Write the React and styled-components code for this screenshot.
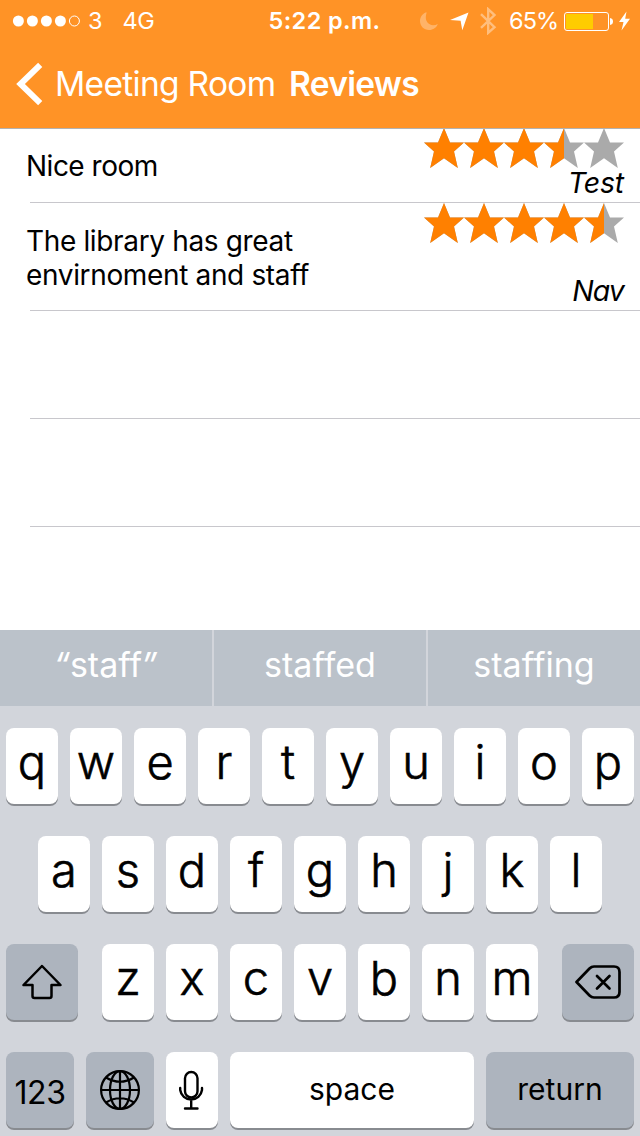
import React from "react";
import styled, { createGlobalStyle } from "styled-components";

const GlobalStyle = createGlobalStyle`
  * { box-sizing: border-box; }
  body { margin: 0; background: #fff; }
`;

const Screen = styled.div`
  width: 640px;
  height: 1136px;
  display: flex;
  flex-direction: column;
  overflow: hidden;
  background: #fff;
  color: #000;
  font-family: Inter, "Liberation Sans", sans-serif;
`;

const Header = styled.header`
  position: relative;
  z-index: 1;
  flex: none;
  height: 128px;
  background: #ff9326;
  box-shadow: 0 1px 0 #b2b2b2;
  color: #fff;
`;

const StatusBar = styled.div`
  display: grid;
  grid-template-columns: 1fr auto 1fr;
  align-items: center;
  height: 40px;
  padding: 1px 9px 0 12px;
  font-size: 23.5px;
  line-height: 40px;
  white-space: pre;
`;

const StatusGroup = styled.div`
  display: flex;
  align-items: center;
  justify-content: ${(p) => (p.$end ? "flex-end" : "flex-start")};
  height: 40px;
`;

const StatusText = styled.span`
  margin-left: ${(p) => p.$left || 0}px;
  letter-spacing: ${(p) => p.$tracking || 0}px;
`;

const Clock = styled.time`
  font-weight: 600;
  letter-spacing: 0.4px;
  margin-left: 6px;
`;

const StatusIcon = styled.svg`
  display: block;
  flex: none;
  margin-left: ${(p) => p.$left || 0}px;
`;

const NavBar = styled.nav`
  display: flex;
  align-items: center;
  height: 88px;
  padding: 0 0 0 16px;
  font-size: 33.5px;
  line-height: 90px;
  white-space: nowrap;
`;

const BackLabel = styled.span`
  margin-left: 11px;
  width: 234px;
  letter-spacing: ${(p) => p.$tracking}px;
`;

const Title = styled.h1`
  margin: 0;
  font-size: inherit;
  font-weight: 600;
  letter-spacing: -0.7px;
`;

const List = styled.main`
  flex: none;
  height: 502px;
`;

const Row = styled.section`
  display: flex;
  justify-content: space-between;
  height: ${(p) => p.$height}px;
  padding: 0 15px 1px 26px;
  background: linear-gradient(#c8c7cc, #c8c7cc) 30px 100% / 610px 1px no-repeat;
`;

const Review = styled.p`
  align-self: center;
  width: 320px;
  margin: ${(p) => p.$top}px 0 0;
  font-size: 28px;
  line-height: 34px;
  letter-spacing: ${(p) => p.$tracking}px;
`;

const Meta = styled.div`
  display: flex;
  flex-direction: column;
  justify-content: space-between;
  align-items: flex-end;
`;

const Author = styled.span`
  font-size: 28.5px;
  font-style: italic;
  line-height: 34px;
  margin: -2px 1px 2px 0;
  letter-spacing: ${(p) => p.$tracking || 0}px;
`;

const StarStrip = styled.svg`
  display: block;
  flex: none;
  margin-right: 1px;
`;

const Keyboard = styled.div`
  flex: 1;
  background: #d2d5db;
`;

const Suggestions = styled.div`
  display: grid;
  grid-template-columns: 212px 212px 212px;
  gap: 2px;
  height: 76px;
`;

const Suggestion = styled.div`
  background: #bbc2ca;
  color: #fff;
  font-size: 34px;
  line-height: 70px;
  text-align: center;
`;

const Quote = styled.span`
  font-style: italic;
  margin-left: -1px;
`;

const KeyRows = styled.div`
  display: flex;
  flex-direction: column;
  gap: 32px;
  padding: 22px 6px 0;
`;

const KeyRow = styled.div`
  display: flex;
  justify-content: ${(p) => (p.$spread ? "space-between" : "center")};
  gap: 12px;
`;

const KeyGroup = styled.div`
  display: flex;
  gap: 12px;
`;

const Key = styled.div`
  flex: none;
  display: flex;
  align-items: center;
  justify-content: center;
  width: ${(p) => p.$width || 52}px;
  height: 76px;
  border-radius: 8px;
  background: ${(p) => (p.$dark ? "#adb4be" : "#fff")};
  box-shadow: 0 2px 0 #888b90;
`;

const Letter = styled.span`
  font-size: 47px;
  font-weight: 300;
  line-height: 76px;
  margin-top: -8px;
  -webkit-text-stroke: 0.6px #000;
`;

const KeyLabel = styled.span`
  font-size: ${(p) => p.$size}px;
  line-height: 76px;
  margin-top: ${(p) => p.$top}px;
  letter-spacing: ${(p) => p.$tracking || 0}px;
`;

const KeyIcon = styled.svg`
  display: block;
  fill: none;
  stroke: #000;
`;

const STAR = "20,0 26,14.4 40,14.4 30,23.6 33.8,40 20,30.3 6.2,40 10,23.6 0,14.4 14,14.4";

function Stars({ id, value }) {
  return (
    <StarStrip width="200" height="40" viewBox="0 0 200 40">
      <defs>
        <clipPath id={id}>
          <rect width={value * 40} height="40" />
        </clipPath>
      </defs>
      {[0, 1, 2, 3, 4].map((i) => (
        <polygon key={i} points={STAR} fill="#aaa" transform={`translate(${i * 40} 0)`} />
      ))}
      <g clipPath={`url(#${id})`}>
        {[0, 1, 2, 3, 4].map((i) => (
          <polygon key={i} points={STAR} fill="#ff8000" transform={`translate(${i * 40} 0)`} />
        ))}
      </g>
    </StarStrip>
  );
}

const letters = (text) =>
  text.split("").map((c) => (
    <Key key={c}>
      <Letter>{c}</Letter>
    </Key>
  ));

export default function App() {
  return (
    <Screen>
      <GlobalStyle />
      <Header>
        <StatusBar>
          <StatusGroup>
            <StatusIcon width="69" height="12" viewBox="0 0 69 12" fill="#fff">
              <circle cx="6.4" cy="6" r="5.5" />
              <circle cx="20.4" cy="6" r="5.5" />
              <circle cx="34.4" cy="6" r="5.5" />
              <circle cx="48.4" cy="6" r="5.5" />
              <circle cx="62.4" cy="6" r="5" fill="none" stroke="#fff" />
            </StatusIcon>
            <StatusText $left={7}>3</StatusText>
            <StatusText $left={20} $tracking={-0.5}>4G</StatusText>
          </StatusGroup>
          <Clock>5:22 p.m.</Clock>
          <StatusGroup $end>
            <StatusIcon width="20" height="20" viewBox="0 0 20 20" opacity="0.3">
              <path d="M8 1C4 2 1 5.600 1 10c0 5 4 9 9 9 4.200 0 7.600-2.400 8.800-6-1.400.8-3 1.200-4.800 1.200-4 0-7.200-3.400-7.200-7.400 0-2.200.4-4.200 1.200-5.800z" fill="#fff" />
            </StatusIcon>
            <StatusIcon $left={11} width="19" height="19" viewBox="0 0 19 19">
              <path d="M18.500.5L12.300 18.300 10.600 8.700 0 7.900z" fill="#fff" />
            </StatusIcon>
            <StatusIcon $left={11} width="17" height="28" viewBox="0 0 17 28" opacity="0.4">
              <path d="M1 7.200L14.500 20.200 8.200 25.800V2.200L14.500 8 1 20.800" fill="none" stroke="#fff" strokeWidth="2.400" />
            </StatusIcon>
            <StatusText $left={12} $tracking={-1}>65%</StatusText>
            <StatusIcon $left={6} width="49" height="19" viewBox="0 0 49 19">
              <rect x=".5" y=".5" width="44" height="18" rx="2.500" fill="none" stroke="#fff" />
              <rect x="2" y="2" width="27" height="15" fill="#ffcc00" />
              <path d="M46 6c2 .3 3 1.500 3 3.500s-1 3.200-3 3.500z" fill="#fff" />
            </StatusIcon>
            <StatusIcon $left={5} width="13" height="20" viewBox="0 0 13 20">
              <path d="M8.500.5L1 11h4.500L3.500 19.500 12 7.800H7.200z" fill="#fff" />
            </StatusIcon>
          </StatusGroup>
        </StatusBar>
        <NavBar>
          <StatusIcon width="28" height="44" viewBox="0 0 28 44">
            <path d="M24.200 2.800L4.500 22l19.700 19.200" fill="none" stroke="#fff" strokeWidth="6" />
          </StatusIcon>
          <BackLabel $tracking={-0.7}>Meeting Room</BackLabel>
          <Title>Reviews</Title>
        </NavBar>
      </Header>
      <List>
        <Row $height={75}>
          <Review $top={1} $tracking={-0.5}>Nice room</Review>
          <Meta>
            <Stars id="rating-a" value={3.5} />
            <Author $tracking={-0.2}>Test</Author>
          </Meta>
        </Row>
        <Row $height={108}>
          <Review $top={3} $tracking={-0.35}>
            The library has great
            <br />
            envirnoment and staff
          </Review>
          <Meta>
            <Stars id="rating-b" value={4.5} />
            <Author $tracking={-0.9}>Nav</Author>
          </Meta>
        </Row>
        <Row $height={108} />
        <Row $height={108} />
      </List>
      <Keyboard>
        <Suggestions>
          <Suggestion>
            <Quote>“</Quote>staff<Quote>”</Quote>
          </Suggestion>
          <Suggestion>staffed</Suggestion>
          <Suggestion>staffing</Suggestion>
        </Suggestions>
        <KeyRows>
          <KeyRow>{letters("qwertyuiop")}</KeyRow>
          <KeyRow>{letters("asdfghjkl")}</KeyRow>
          <KeyRow $spread>
            <Key $width={72} $dark>
              <KeyIcon width="40" height="36" viewBox="0 0 40 36" strokeWidth="2.500" strokeLinejoin="round">
                <path d="M20 2L1.500 21H10.500V32Q10.500 34 12.500 34H27.500Q29.500 34 29.500 32V21H38.500Z" />
              </KeyIcon>
            </Key>
            <KeyGroup>{letters("zxcvbnm")}</KeyGroup>
            <Key $width={72} $dark>
              <KeyIcon width="46" height="34" viewBox="0 0 46 34" strokeWidth="2.700" strokeLinejoin="round" strokeLinecap="round">
                <path d="M19 1.500H39Q44.500 1.500 44.500 7V27Q44.500 32.500 39 32.500H19Q16.500 32.500 14.500 30.500L1.500 17 14.500 3.500Q16.500 1.500 19 1.500" />
                <path d="M22 11L34.500 23.500M34.500 11L22 23.500" />
              </KeyIcon>
            </Key>
          </KeyRow>
          <KeyRow>
            <Key $width={68} $dark>
              <KeyLabel $size={32} $top={5} $tracking={-0.4}>123</KeyLabel>
            </Key>
            <Key $width={68} $dark>
              <KeyIcon width="40" height="40" viewBox="0 0 40 40" strokeWidth="2.200">
                <circle cx="20" cy="20" r="18.900" />
                <ellipse cx="20" cy="20" rx="10" ry="18.900" />
                <path d="M20 1V39M1 20H39M6 7.500Q20 16 34 7.500M6 32.500Q20 24 34 32.500" />
              </KeyIcon>
            </Key>
            <Key>
              <KeyIcon width="26" height="40" viewBox="0 0 26 40" strokeWidth="2.400" strokeLinecap="round">
                <rect x="6" y="2" width="12.500" height="25.500" rx="6.250" />
                <path d="M1.200 18V20A11 11 0 0 0 23 20V18M12.200 31V38.500M6 38.500H18.500" />
              </KeyIcon>
            </Key>
            <Key $width={244}>
              <KeyLabel $size={30} $top={-2}>space</KeyLabel>
            </Key>
            <Key $width={148} $dark>
              <KeyLabel $size={30} $top={-2}>return</KeyLabel>
            </Key>
          </KeyRow>
        </KeyRows>
      </Keyboard>
    </Screen>
  );
}
